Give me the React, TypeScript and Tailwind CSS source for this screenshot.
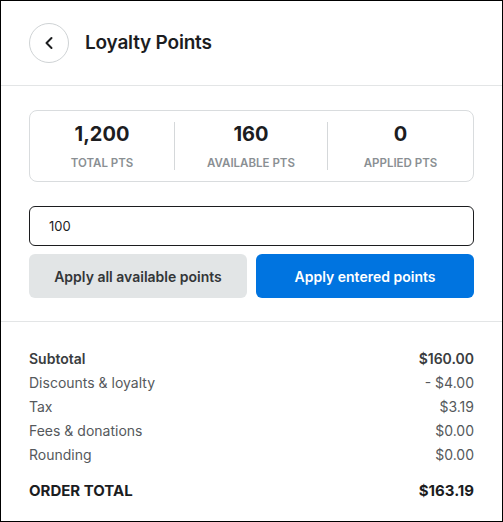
import { ChevronLeft } from "lucide-react";

const stats = [
  { value: "1,200", label: "TOTAL PTS", w: "w-[144px]" },
  { value: "160", label: "AVAILABLE PTS", w: "w-[153px]" },
  { value: "0", label: "APPLIED PTS", w: "flex-1" },
];

const rows = [
  { label: "Subtotal", amount: "$160.00", strong: true },
  { label: "Discounts & loyalty", amount: "- $4.00" },
  { label: "Tax", amount: "$3.19" },
  { label: "Fees & donations", amount: "$0.00" },
  { label: "Rounding", amount: "$0.00" },
];

export default function App() {
  return (
    <div
      className="w-[503px] h-[522px] border border-black bg-white text-[#1c1d1f] overflow-hidden"
      style={{ fontFamily: "Inter, 'Noto Sans', sans-serif" }}
    >
      {/* Header */}
      <div className="h-[85px] flex items-center gap-4 px-[28px] border-b border-[#e3e5e6]">
        <button className="w-10 h-10 rounded-full border border-[#cfd3d5] flex items-center justify-center">
          <ChevronLeft className="w-5 h-5 text-[#1c1d1f]" strokeWidth={2.4} />
        </button>
        <h1 className="text-[19px] font-semibold tracking-[-0.2px]">Loyalty Points</h1>
      </div>

      {/* Points */}
      <div className="px-[28px] pt-[24px] pb-[23px] border-b border-[#e3e5e6]">
        <div className="h-[72px] rounded-lg border border-[#d9dcde] flex items-center">
          {stats.map((s, i) => (
            <div
              key={s.label}
              className={
                s.w +
                " h-[48px] flex flex-col items-center justify-between " +
                (i > 0 ? "border-l border-[#d5d8da]" : "")
              }
            >
              <span className="text-[20px] leading-[24px] font-bold">{s.value}</span>
              <span className="text-[11.5px] leading-[14px] font-semibold text-[#8a8f93]">{s.label}</span>
            </div>
          ))}
        </div>

        <input
          defaultValue="100"
          className="mt-[24px] w-full h-[40px] rounded-md border border-[#1c1d1f] px-[19px] text-[13px] text-[#1c1d1f] outline-none"
        />

        <div className="mt-[8px] flex gap-[9px]">
          <button className="flex-1 h-[44px] rounded-md bg-[#e2e5e6] text-[14px] font-semibold text-[#333638]">
            Apply all available points
          </button>
          <button className="flex-1 h-[44px] rounded-md bg-[#0074e0] text-[14px] font-semibold text-white">
            Apply entered points
          </button>
        </div>
      </div>

      {/* Summary */}
      <div className="px-[28px] pt-[24px]">
        {rows.map((r) => (
          <div
            key={r.label}
            className={
              "flex justify-between h-[24px] items-center text-[14px] " +
              (r.strong ? "font-semibold text-[#3a3d40]" : "text-[#55595c]")
            }
          >
            <span>{r.label}</span>
            <span>{r.amount}</span>
          </div>
        ))}
        <div className="mt-[13px] flex justify-between h-[24px] items-center text-[15px] font-bold text-[#1c1d1f]">
          <span>ORDER TOTAL</span>
          <span>$163.19</span>
        </div>
      </div>
    </div>
  );
}
